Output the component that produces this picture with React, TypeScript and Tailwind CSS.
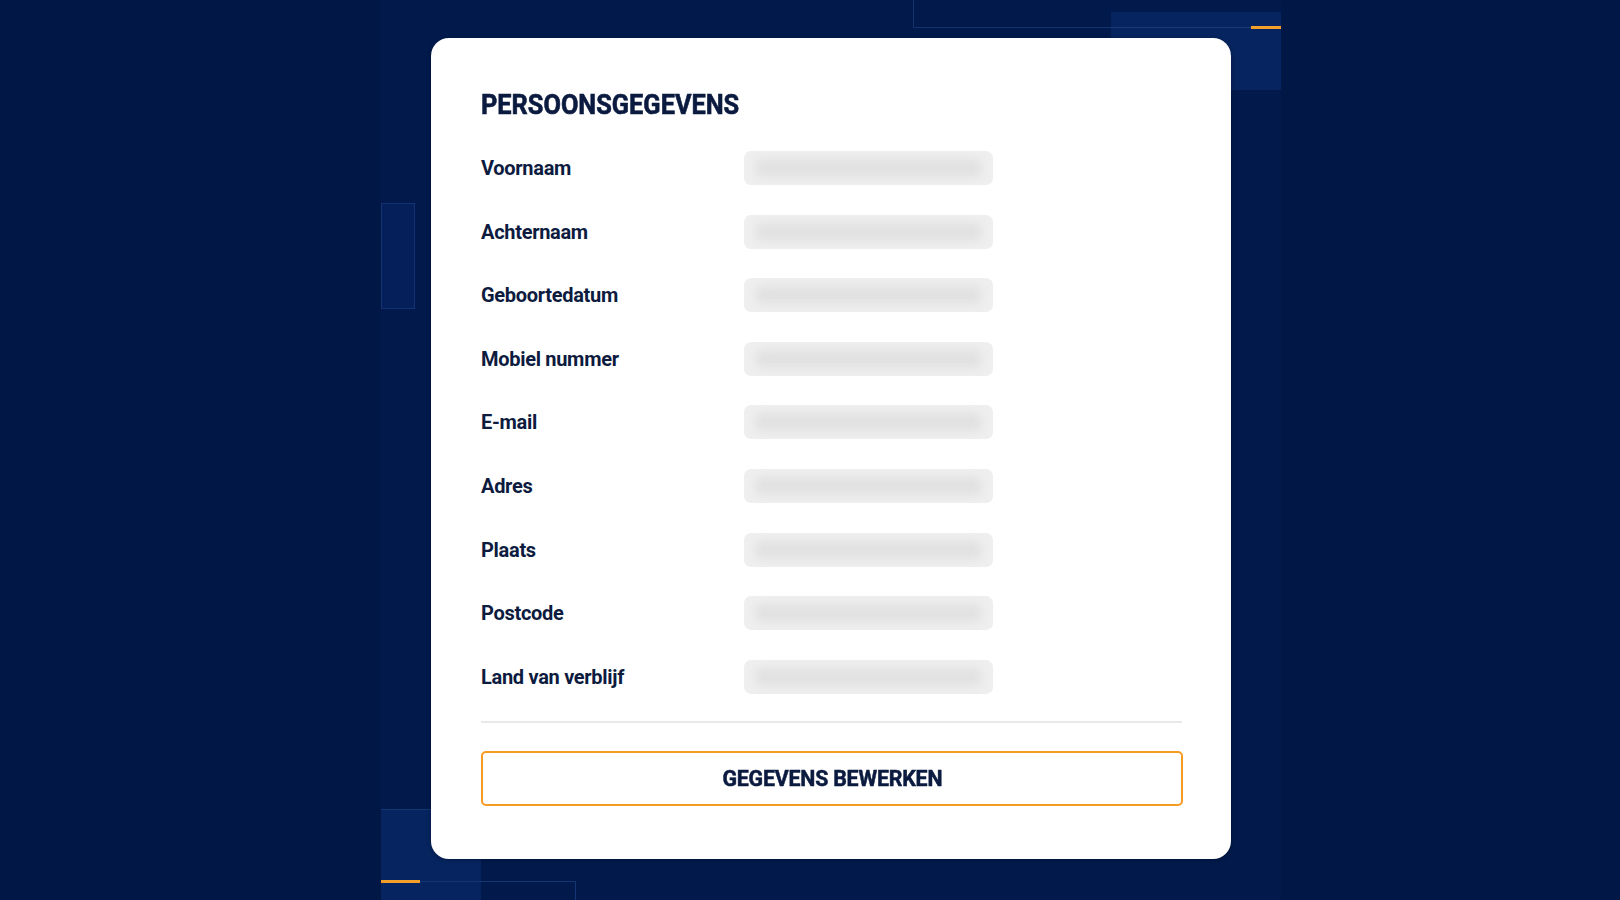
import React from "react";

const fields = [
  "Voornaam",
  "Achternaam",
  "Geboortedatum",
  "Mobiel nummer",
  "E-mail",
  "Adres",
  "Plaats",
  "Postcode",
  "Land van verblijf",
];

const font = { fontFamily: "'Roboto', 'Liberation Sans', sans-serif" };

function BlurField() {
  return (
    <div className="h-[34px] w-[249px] overflow-hidden rounded-[7px] bg-[#efefef] px-[12px] py-[8px] blur-[0.6px]">
      <div className="h-full w-full rounded-[4px] bg-[#e1e1e1] blur-[5px]" />
    </div>
  );
}

function Backdrop() {
  return (
    <svg
      className="absolute inset-0 h-full w-full"
      viewBox="0 0 1620 900"
      preserveAspectRatio="none"
    >
      <rect x="0" y="0" width="1620" height="900" fill="#011846" />
      <rect x="381" y="0" width="900" height="900" fill="#011a4b" />
      <path d="M913.5 0 V27.5 H1251" stroke="#143470" strokeWidth="1" fill="none" />
      <rect x="1111" y="12" width="170" height="78" fill="#06245f" />
      <line x1="1111" y1="27.5" x2="1251" y2="27.5" stroke="#18397a" strokeWidth="1" />
      <rect x="1251" y="26" width="30" height="3" fill="#f2a02a" />
      <rect x="381.5" y="203.5" width="33" height="105" fill="#041f59" stroke="#123274" />
      <rect x="381" y="809" width="100" height="91" fill="#06245f" />
      <line x1="381" y1="809.5" x2="481" y2="809.5" stroke="#143674" />
      <path d="M420 881.5 H575.5 V900" stroke="#143674" strokeWidth="1" fill="none" />
      <rect x="381" y="880" width="39" height="3" fill="#f2a02a" />
    </svg>
  );
}

export default function App() {
  return (
    <div className="relative h-[900px] w-full overflow-hidden bg-[#011846]" style={font}>
      <Backdrop />
      <div className="relative z-10 flex pl-[431px] pt-[38px]">
        <div className="flex w-[800px] flex-col rounded-[18px] bg-white pb-[53px] pl-[50px] pr-[49px] pt-[53px] shadow-[0_1px_4px_rgba(0,0,0,0.3)]">
          <h1 className="text-[28px] font-bold leading-[28px] text-[#0b1a3f]">
            <span className="inline-block origin-left scale-x-[0.905] [-webkit-text-stroke:0.6px_#0b1a3f]">
              PERSOONSGEGEVENS
            </span>
          </h1>
          <div className="mt-[32px] flex flex-col gap-[29.6px]">
            {fields.map((f) => (
              <div key={f} className="flex h-[34px] items-center">
                <div className="w-[263px] text-[20px] font-bold tracking-[-0.3px] text-[#0d1b3f]">
                  {f}
                </div>
                <BlurField />
              </div>
            ))}
          </div>
          <div className="mt-[27px] h-[2px] w-full bg-[#e9e9ec]" />
          <button className="mt-[28px] flex h-[55px] w-[702px] items-center justify-center rounded-[5px] border-2 border-[#f59b22] bg-white text-[22px] font-bold text-[#0b1a3f]">
            <span className="inline-block scale-x-[0.97] tracking-[-0.2px] [-webkit-text-stroke:0.5px_#0b1a3f]">
              GEGEVENS BEWERKEN
            </span>
          </button>
        </div>
      </div>
    </div>
  );
}
